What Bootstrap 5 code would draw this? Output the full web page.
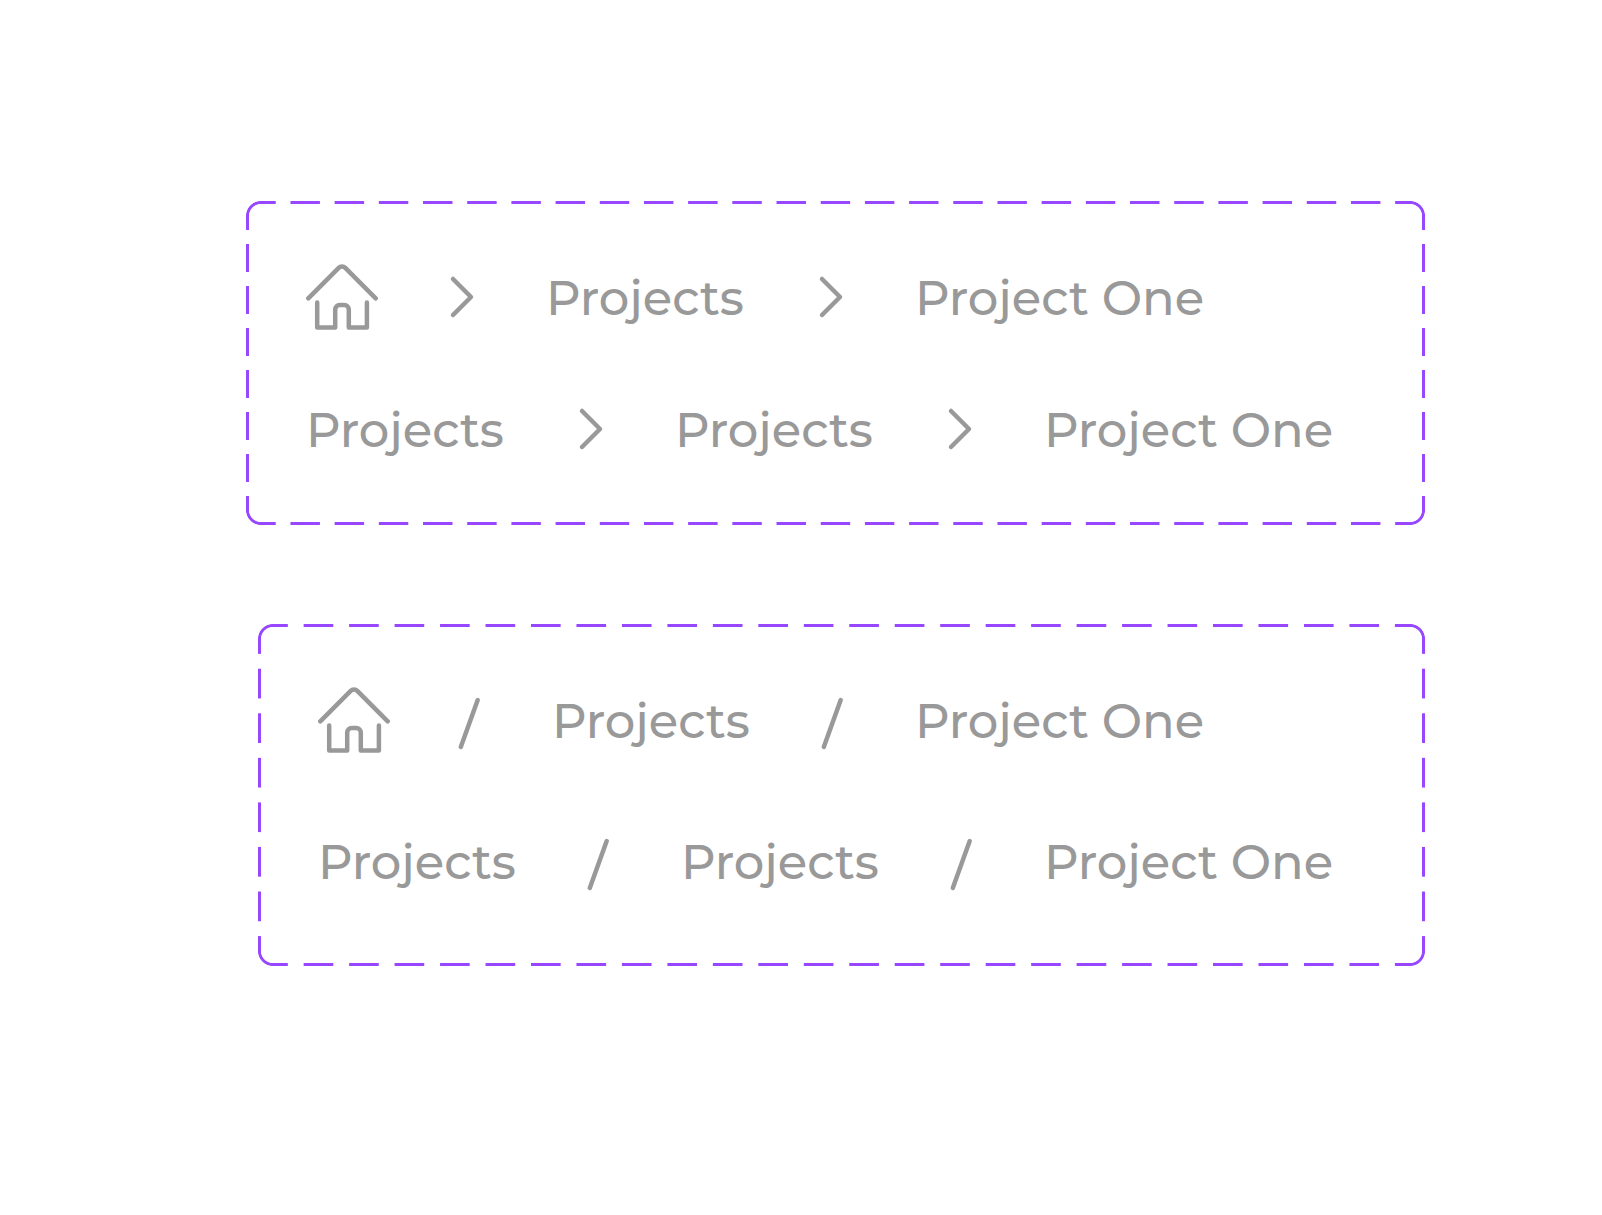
<!DOCTYPE html>
<html lang="en">
<head>
<meta charset="utf-8">
<meta name="viewport" content="width=device-width, initial-scale=1">
<title>Breadcrumbs</title>
<link href="https://cdn.jsdelivr.net/npm/bootstrap@5.3.0/dist/css/bootstrap.min.css" rel="stylesheet">
<style>
  :root { --frame: #9747ff; --crumb: #999; }
  body { background: #fff; font-family: Montserrat, Inter, "Open Sans", sans-serif; }
  .sheet { padding: 201px 177px 60px 246px; gap: 99px; }

  /* Variant frame: rounded corners on the box, dashes on the pseudo-elements.
     "round" keeps a whole number of dashes on every side. */
  .variant-frame {
    --arc: transparent 78%, var(--frame) 83% 97%, transparent 102%;
    padding: 60px;
    gap: 60px;
    background:
      radial-gradient(15px circle at 100% 100%, var(--arc)) 0 0 / 15px 15px no-repeat,
      radial-gradient(15px circle at 0 100%, var(--arc)) 100% 0 / 15px 15px no-repeat,
      radial-gradient(15px circle at 100% 0, var(--arc)) 0 100% / 15px 15px no-repeat,
      radial-gradient(15px circle at 0 0, var(--arc)) 100% 100% / 15px 15px no-repeat;
  }
  .variant-frame::before, .variant-frame::after {
    --dash: var(--frame) 33.3%, transparent 33.3% 66.7%, var(--frame) 66.7%;
    content: ""; position: absolute; pointer-events: none;
  }
  .variant-frame::before {
    inset: 0 15px;
    background:
      linear-gradient(90deg, var(--dash)) 0 0 / 45px 3px round no-repeat,
      linear-gradient(90deg, var(--dash)) 0 100% / 45px 3px round no-repeat;
  }
  .variant-frame::after {
    inset: 15px 0;
    background:
      linear-gradient(var(--dash)) 0 0 / 3px 45px no-repeat round,
      linear-gradient(var(--dash)) 100% 0 / 3px 45px no-repeat round;
  }
  .variant-slash { margin-left: 12px; }

  .crumbs { gap: 60px; color: var(--crumb); font-size: 48px; font-weight: 500; line-height: 70px; }
  .crumbs a { color: inherit; text-decoration: none; display: block; }
  .crumb-text { min-width: 201px; padding-top: 2px; white-space: nowrap; }
  .crumbs svg { display: block; fill: none; stroke: currentColor; stroke-width: 4.5; stroke-linecap: round; stroke-linejoin: round; }
</style>
</head>
<body>
<svg class="d-none" aria-hidden="true">
  <symbol id="home" viewBox="0 0 72 72">
    <path d="M2.3 37.3 32.7 6.9a4.6 4.6 0 0 1 6.6 0L69.7 37.3"/>
    <path d="M11.2 41.5V66.5H29.2V48.5a4.5 4.5 0 0 1 4.5-4.5h4.6a4.5 4.5 0 0 1 4.5 4.5V66.5H60.9V41.5"/>
  </symbol>
  <symbol id="chevron" viewBox="0 0 48 48"><path d="M15 6 33 24 15 42"/></symbol>
  <symbol id="slash" viewBox="0 0 42 81"><path d="M27.7 16 10.8 63"/></symbol>
</svg>

<main class="sheet d-flex flex-column">
  <section class="variant-frame position-relative d-flex flex-column" aria-label="Chevron breadcrumbs">
    <nav aria-label="Home breadcrumb">
      <ol class="crumbs list-unstyled d-flex align-items-center mb-0">
        <li><a href="#" aria-label="Home"><svg width="72" height="72"><use href="#home"/></svg></a></li>
        <li aria-hidden="true"><svg width="48" height="48"><use href="#chevron"/></svg></li>
        <li class="crumb-text"><a href="#">Projects</a></li>
        <li aria-hidden="true"><svg width="48" height="48"><use href="#chevron"/></svg></li>
        <li class="crumb-text"><a href="#" aria-current="page">Project One</a></li>
      </ol>
    </nav>
    <nav aria-label="Project breadcrumb">
      <ol class="crumbs list-unstyled d-flex align-items-center mb-0">
        <li class="crumb-text"><a href="#">Projects</a></li>
        <li aria-hidden="true"><svg width="48" height="48"><use href="#chevron"/></svg></li>
        <li class="crumb-text"><a href="#">Projects</a></li>
        <li aria-hidden="true"><svg width="48" height="48"><use href="#chevron"/></svg></li>
        <li class="crumb-text"><a href="#" aria-current="page">Project One</a></li>
      </ol>
    </nav>
  </section>

  <section class="variant-frame variant-slash position-relative d-flex flex-column" aria-label="Slash breadcrumbs">
    <nav aria-label="Home breadcrumb with slashes">
      <ol class="crumbs list-unstyled d-flex align-items-start mb-0">
        <li><a href="#" aria-label="Home"><svg width="72" height="72"><use href="#home"/></svg></a></li>
        <li aria-hidden="true"><svg width="42" height="81"><use href="#slash"/></svg></li>
        <li class="crumb-text"><a href="#">Projects</a></li>
        <li aria-hidden="true"><svg width="42" height="81"><use href="#slash"/></svg></li>
        <li class="crumb-text"><a href="#" aria-current="page">Project One</a></li>
      </ol>
    </nav>
    <nav aria-label="Project breadcrumb with slashes">
      <ol class="crumbs list-unstyled d-flex align-items-start mb-0">
        <li class="crumb-text"><a href="#">Projects</a></li>
        <li aria-hidden="true"><svg width="42" height="81"><use href="#slash"/></svg></li>
        <li class="crumb-text"><a href="#">Projects</a></li>
        <li aria-hidden="true"><svg width="42" height="81"><use href="#slash"/></svg></li>
        <li class="crumb-text"><a href="#" aria-current="page">Project One</a></li>
      </ol>
    </nav>
  </section>
</main>
<script src="https://cdn.jsdelivr.net/npm/bootstrap@5.3.0/dist/js/bootstrap.bundle.min.js"></script>
</body>
</html>
